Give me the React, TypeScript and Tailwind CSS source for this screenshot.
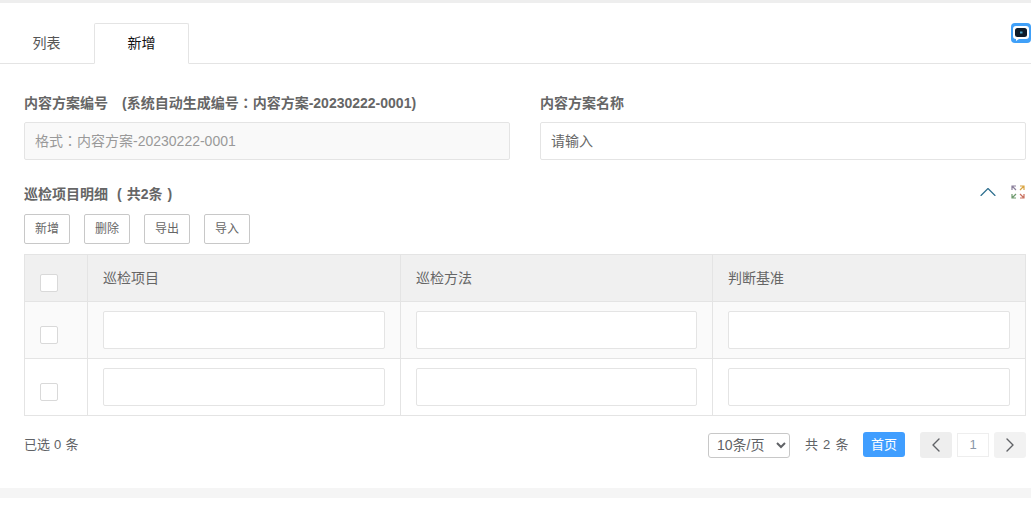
import * as React from 'react';
import { ChevronLeft, ChevronRight, ChevronUp } from 'lucide-react';

const font = 'font-["Liberation_Sans","Noto_Sans_CJK_SC",sans-serif]';
const colonFont = 'font-["Liberation_Sans","Noto_Sans_CJK_TC",sans-serif]';

function Checkbox() {
  return <span className="block h-[18px] w-[18px] rounded-[2px] border border-[#d9d9d9] bg-white" />;
}

function CellInput() {
  return <input className="block h-[38px] w-full rounded-[2px] border border-[#e4e4e4] bg-white outline-none" />;
}

function Row({ last }: { last?: boolean }) {
  return (
    <div className={`flex ${last ? 'h-[56px] bg-white' : 'h-[57px] border-b border-[#e4e4e4] bg-[#fafafa]'}`}>
      <div className="flex w-[63px] shrink-0 items-center border-r border-[#e4e4e4] pt-[10px] pl-[15px]">
        <Checkbox />
      </div>
      <div className="w-[313px] shrink-0 border-r border-[#e4e4e4] pt-[9px] pr-[15px] pl-[15px]">
        <CellInput />
      </div>
      <div className="w-[312px] shrink-0 border-r border-[#e4e4e4] pt-[9px] pr-[15px] pl-[15px]">
        <CellInput />
      </div>
      <div className="flex-1 pt-[9px] pr-[15px] pl-[15px]">
        <CellInput />
      </div>
    </div>
  );
}

function ExpandIcon() {
  return (
    <svg width="14" height="14" viewBox="0 0 14 14" fill="none" strokeWidth="1.2">
      <path d="M1 5V1h4M1 1l4 4" stroke="#8a7f9a" />
      <path d="M9 1h4v4M13 1L9 5" stroke="#d9a441" />
      <path d="M1 9v4h4M1 13l4-4" stroke="#6f9a6f" />
      <path d="M13 9v4H9M13 13L9 9" stroke="#c9705f" />
    </svg>
  );
}

function ChatIcon() {
  return (
    <svg width="20" height="20" viewBox="0 0 20 20">
      <rect width="20" height="20" rx="4" fill="#40a0f8" />
      <path d="M5 3h10a3 3 0 0 1 3 3v7a3 3 0 0 1-3 3H8l-3 2v-2a3 3 0 0 1-3-3V6a3 3 0 0 1 3-3z" fill="#fff" />
      <rect x="4" y="5" width="12" height="9" rx="2.5" fill="#0d1b2a" />
      <rect x="9" y="8.5" width="2.5" height="2" fill="#4aa3c7" />
    </svg>
  );
}

function ToolButton({ label }: { label: string }) {
  return (
    <button className="h-[30px] w-[46px] rounded-[2px] border border-[#c8c8c8] bg-white text-[12px] text-[#666]">
      {label}
    </button>
  );
}

export default function App() {
  return (
    <div className={`${font} h-[506px] w-[1031px] overflow-hidden bg-white`}>
      <div className="h-[3px] bg-[#eeeeee]" />

      <div className="relative flex h-[61px] items-end border-b border-[#e4e4e4] pt-[20px]">
        <div className="flex h-[40px] w-[94px] items-center justify-center pr-[1px] text-[14px] text-[#555]">列表</div>
        <div className="-mb-px flex h-[41px] w-[95px] items-center justify-center rounded-t-[2px] border border-b-white border-[#e4e4e4] bg-white text-[14px] text-[#111]">
          新增
        </div>
        <div className="absolute top-[20px] right-0">
          <ChatIcon />
        </div>
      </div>

      <div className="flex gap-[30px] pt-[30px] pr-[5px] pl-[24px]">
        <div className="w-[486px]">
          <div className="h-[18px] text-[14px] leading-[18px] font-bold whitespace-nowrap text-[#666]">
            内容方案编号
            <span className="ml-[14px]">(系统自动生成编号<span className={colonFont}>：</span>内容方案-20230222-0001)</span>
          </div>
          <input
            readOnly
            placeholder="格式：内容方案-20230222-0001"
            className={`${colonFont} mt-[10px] block h-[38px] w-full rounded-[2px] border border-[#e4e4e4] bg-[#f9f9f9] px-[10px] text-[14px] outline-none placeholder:text-[#999]`}
          />
        </div>
        <div className="flex-1">
          <div className="h-[18px] text-[14px] leading-[18px] font-bold text-[#666]">内容方案名称</div>
          <input
            placeholder="请输入"
            className="mt-[10px] block h-[38px] w-full rounded-[2px] border border-[#e4e4e4] bg-white px-[10px] text-[14px] outline-none placeholder:text-[#666]"
          />
        </div>
      </div>

      <div className="flex h-[44px] items-end justify-between pr-[6px] pl-[24px]">
        <div className="pb-[1px] text-[14px] leading-[18px] font-bold text-[#666]">
          巡检项目明细
          <span className="ml-[9px]">(</span>
          <span className="ml-[5px]">共2条</span>
          <span className="ml-[5px]">)</span>
        </div>
        <div className="-mb-[2px] flex items-center gap-[9px]">
          <ChevronUp size={28} strokeWidth={1} className="text-[#2f6f8f]" />
          <ExpandIcon />
        </div>
      </div>

      <div className="flex gap-[14px] px-[24px] pt-[10px]">
        <ToolButton label="新增" />
        <ToolButton label="删除" />
        <ToolButton label="导出" />
        <ToolButton label="导入" />
      </div>

      <div className="mt-[10px] mr-[5px] ml-[24px] border border-[#e4e4e4] bg-white">
        <div className="flex h-[47px] border-b border-[#e4e4e4] bg-[#f0f0f0] text-[14px] text-[#666]">
          <div className="flex w-[63px] shrink-0 items-center border-r border-[#e4e4e4] pt-[10px] pl-[15px]">
            <Checkbox />
          </div>
          <div className="flex w-[313px] shrink-0 items-center border-r border-[#e4e4e4] pl-[15px]">巡检项目</div>
          <div className="flex w-[312px] shrink-0 items-center border-r border-[#e4e4e4] pl-[15px]">巡检方法</div>
          <div className="flex flex-1 items-center pl-[15px]">判断基准</div>
        </div>
        <Row />
        <Row last />
      </div>

      <div className="mt-[16px] flex h-[26px] items-center justify-between pr-[5px] pl-[24px] text-[13px] text-[#606266]">
        <div className="[word-spacing:0.5px]">已选 0 条</div>
        <div className="flex items-center">
          <select className="h-[25px] w-[82px] rounded-[3px] border border-[#c8c8c8] bg-white pl-[4px] text-[14px] text-[#606266] outline-none">
            <option>10条/页</option>
          </select>
          <span className="ml-[15px] w-[43px] whitespace-nowrap [word-spacing:1.5px]">共 2 条</span>
          <button className="ml-[15px] mb-[1px] h-[25px] w-[42px] rounded-[3px] bg-[#409eff] text-[13px] text-white">首页</button>
          <button className="ml-[15px] flex h-[26px] w-[32px] items-center justify-center rounded-[3px] bg-[#eeeeee] text-[#606266]">
            <ChevronLeft size={24} strokeWidth={1.4} />
          </button>
          <div className="ml-[5px] flex h-[24px] w-[32px] items-center justify-center border border-[#eeeeee] text-[13px] text-[#8a97a8]">
            1
          </div>
          <button className="ml-[5px] flex h-[26px] w-[32px] items-center justify-center rounded-[3px] bg-[#f2f2f2] text-[#606266]">
            <ChevronRight size={24} strokeWidth={1.4} />
          </button>
        </div>
      </div>

      <div className="mt-[30px] h-[10px] bg-[#f5f5f5]" />
    </div>
  );
}
